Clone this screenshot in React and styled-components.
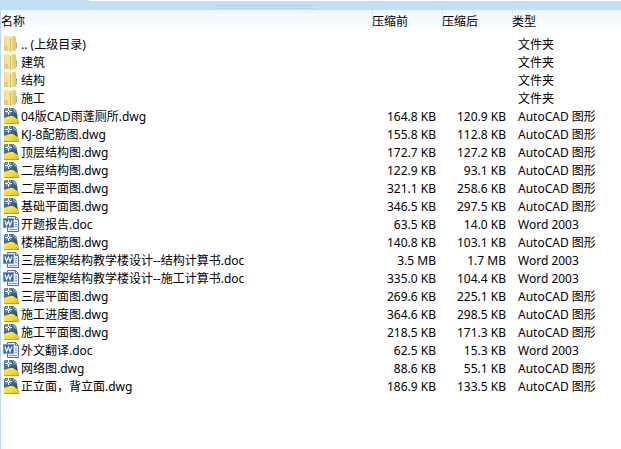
import React, { Component } from 'react'
import styled, { createGlobalStyle } from 'styled-components'

const GlobalStyle = createGlobalStyle`
	body {
		margin: 0;
		background: #fff;
		color: #000;
		font: 12px/16px "Noto Sans", "Noto Sans CJK SC", sans-serif;
	}
`

const Window = styled.main`
	display: flex;
	flex-direction: column;
	min-height: 100vh;
`

const TopEdge = styled.div`
	height: 1px;
	margin-left: 89px;
	background: #fff;
`

const TopBar = styled.header`
	display: flex;
	flex-direction: column;
	height: 10px;
	background: #c2dff8;
`

const BarLine = styled.div`
	height: 1px;
	background: #b6d3f0;
	margin-top: ${props => (props.$low ? '2px' : '4px')};
	margin-left: 215px;
	width: 101px;
`

const Panel = styled.section`
	flex: 1;
	border-left: 1px solid #bcd6f5;
	background: #fff;
`

const FileTable = styled.table`
	width: 100%;
	table-layout: fixed;
	border-collapse: collapse;
`

const HeadRow = styled.tr`
	height: 25px;
	background: linear-gradient(#f1f7fe, #fff 23px);
`

const HeadCell = styled.th`
	width: ${props => props.$width || 'auto'};
	padding: 4px 0 5px;
	text-align: left;
	font-weight: 400;
	background: ${props => (props.$line ? 'linear-gradient(#d3e6f9, #f4f9fe) 0 0 / 1px 23px no-repeat' : 'none')};
`

const Row = styled.tr`
	height: 18px;
`

const Cell = styled.td`
	padding: 2px 6px 0;
	white-space: nowrap;
	text-align: ${props => (props.$right ? 'right' : 'left')};
`

const NameCell = styled.td`
	padding: 0 0 0 2px;
`

const FileName = styled.div`
	display: flex;
	align-items: center;
	gap: 1px;
	height: 18px;
	white-space: nowrap;
`

const NameText = styled.span`
	padding-top: 2px;
`

const Icon = styled.svg`
	flex: none;
	width: 17px;
	height: 18px;
`

const FolderIcon = () => (
	<Icon viewBox="0 0 17 18" aria-hidden="true">
		<defs>
			<linearGradient id="folderBack" x1="0" y1="0" x2="1" y2="0">
				<stop offset="0" stopColor="#ecd888" />
				<stop offset="0.5" stopColor="#faf0b8" />
				<stop offset="1" stopColor="#e2c768" />
			</linearGradient>
			<linearGradient id="folderFront" x1="0" y1="0" x2="1" y2="0">
				<stop offset="0" stopColor="#fbf0b0" />
				<stop offset="1" stopColor="#e0c263" />
			</linearGradient>
		</defs>
		<path d="M1 2 L2 1 H12 L13 2 V15 L12 16 H1 Z" fill="url(#folderBack)" />
		<path d="M1 11 H6 V16 H1 Z" fill="#dfc25e" opacity="0.6" />
		<path d="M5 3 L7 2 V16 L5 15 Z" fill="#f5e59c" />
		<path d="M7 4 L12 2 V14 L8 17 H7 Z" fill="url(#folderFront)" />
		<path d="M7 3 H8 V17 H7 Z" fill="#dcbd5c" />
		<path d="M12 3 H13 V14 H12 Z" fill="#e6cb70" />
		<path d="M13 6 L14 8 V13 L13 14 Z" fill="#8fb7b4" />
	</Icon>
)

const DwgIcon = () => (
	<Icon viewBox="0 0 17 18" aria-hidden="true">
		<defs>
			<linearGradient id="dwgPage" x1="0" y1="0" x2="1" y2="1">
				<stop offset="0" stopColor="#5f84a4" />
				<stop offset="0.5" stopColor="#3f678e" />
				<stop offset="1" stopColor="#1c416a" />
			</linearGradient>
			<linearGradient id="dwgGold" x1="0" y1="0" x2="1" y2="1">
				<stop offset="0" stopColor="#ffef5c" />
				<stop offset="0.6" stopColor="#f8d428" />
				<stop offset="1" stopColor="#e3b015" />
			</linearGradient>
		</defs>
		<path d="M2 1 H10 L13 3 L14 6 L15 14 H1 V2 Z" fill="url(#dwgPage)" />
		<path d="M10 1 L13 3 L14 7 L10 4 Z" fill="#8099b0" />
		<path d="M1 11 L7 9 H10 L16 13 V17 H1 Z" fill="url(#dwgGold)" />
		<path d="M1 16 H16 V17 H1 Z" fill="#cf9d14" />
		<path d="M5.5 1 V8 M2 4.5 H9" stroke="#f4f8fb" />
		<path d="M3 2 L8 7 M8 2 L3 7" stroke="#c5d5e2" strokeWidth="0.7" />
		<rect x="5" y="4" width="1" height="1" fill="#365c80" />
	</Icon>
)

const DocIcon = () => (
	<Icon viewBox="0 0 17 18" aria-hidden="true">
		<path d="M4.5 1.5 H12.5 L15.5 4.5 V16.5 H4.5 Z" fill="#eaf1fd" stroke="#4f6da6" />
		<path d="M12.5 2 V4.5 H15" fill="none" stroke="#4f6da6" />
		<path d="M12 7.5 H14 M12 9.5 H14 M12 11.5 H14 M6 14.5 H14" stroke="#7f99cb" />
		<rect x="0.5" y="3.5" width="10" height="9" fill="#3762ac" stroke="#7c9bcc" />
		<path d="M2 5.5 L3.5 10.5 L5.5 6 L7 10.5 L9 5.5" fill="none" stroke="#fff" strokeWidth="1.2" />
	</Icon>
)

const kinds = {
	folder: { icon: FolderIcon, label: '文件夹' },
	dwg: { icon: DwgIcon, label: 'AutoCAD 图形' },
	doc: { icon: DocIcon, label: 'Word 2003' }
}

export class FileList extends Component {
	state = {
		files: [
			{ name: '.. (上级目录)', kind: 'folder' },
			{ name: '建筑', kind: 'folder' },
			{ name: '结构', kind: 'folder' },
			{ name: '施工', kind: 'folder' },
			{ name: '04版CAD雨蓬厕所.dwg', before: '164.8 KB', after: '120.9 KB', kind: 'dwg' },
			{ name: 'KJ-8配筋图.dwg', before: '155.8 KB', after: '112.8 KB', kind: 'dwg' },
			{ name: '顶层结构图.dwg', before: '172.7 KB', after: '127.2 KB', kind: 'dwg' },
			{ name: '二层结构图.dwg', before: '122.9 KB', after: '93.1 KB', kind: 'dwg' },
			{ name: '二层平面图.dwg', before: '321.1 KB', after: '258.6 KB', kind: 'dwg' },
			{ name: '基础平面图.dwg', before: '346.5 KB', after: '297.5 KB', kind: 'dwg' },
			{ name: '开题报告.doc', before: '63.5 KB', after: '14.0 KB', kind: 'doc' },
			{ name: '楼梯配筋图.dwg', before: '140.8 KB', after: '103.1 KB', kind: 'dwg' },
			{ name: '三层框架结构教学楼设计--结构计算书.doc', before: '3.5 MB', after: '1.7 MB', kind: 'doc' },
			{ name: '三层框架结构教学楼设计--施工计算书.doc', before: '335.0 KB', after: '104.4 KB', kind: 'doc' },
			{ name: '三层平面图.dwg', before: '269.6 KB', after: '225.1 KB', kind: 'dwg' },
			{ name: '施工进度图.dwg', before: '364.6 KB', after: '298.5 KB', kind: 'dwg' },
			{ name: '施工平面图.dwg', before: '218.5 KB', after: '171.3 KB', kind: 'dwg' },
			{ name: '外文翻译.doc', before: '62.5 KB', after: '15.3 KB', kind: 'doc' },
			{ name: '网络图.dwg', before: '88.6 KB', after: '55.1 KB', kind: 'dwg' },
			{ name: '正立面，背立面.dwg', before: '186.9 KB', after: '133.5 KB', kind: 'dwg' }
		]
	}

	render() {
		const rows = this.state.files.map(file => {
			const KindIcon = kinds[file.kind].icon
			return (
				<Row key={file.name}>
					<NameCell>
						<FileName>
							<KindIcon />
							<NameText>{file.name}</NameText>
						</FileName>
					</NameCell>
					<Cell $right>{file.before}</Cell>
					<Cell $right>{file.after}</Cell>
					<Cell>{kinds[file.kind].label}</Cell>
				</Row>
			)
		})

		return (
			<FileTable>
				<thead>
					<HeadRow>
						<HeadCell>名称</HeadCell>
						<HeadCell $width="70px" $line>压缩前</HeadCell>
						<HeadCell $width="70px" $line>压缩后</HeadCell>
						<HeadCell $width="109px" $line>类型</HeadCell>
					</HeadRow>
				</thead>
				<tbody>{rows}</tbody>
			</FileTable>
		)
	}
}

export default function App() {
	return (
		<Window>
			<GlobalStyle />
			<TopBar>
				<TopEdge />
				<BarLine />
				<BarLine $low />
			</TopBar>
			<Panel>
				<FileList />
			</Panel>
		</Window>
	)
}
